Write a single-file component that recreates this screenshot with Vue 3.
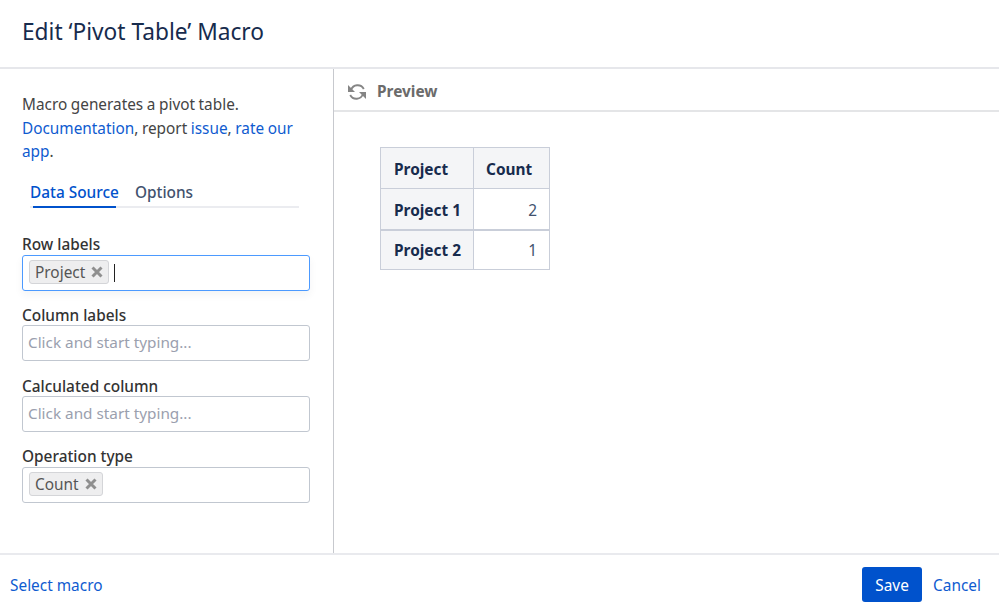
<script setup>
const rows = [{ name: 'Project 1', count: 2 }, { name: 'Project 2', count: 1 }]
</script>

<template>
  <div class="dialog">
    <header class="head"><h1>Edit ‘Pivot Table’ Macro</h1></header>
    <main class="body">
      <aside class="side">
        <p class="intro">Macro generates a pivot table.<br><a>Documentation</a>, report <a>issue</a>, <a>rate our</a><br><a>app</a>.</p>
        <div class="tabs">
          <span class="tab active">Data Source</span>
          <span class="tab">Options</span>
        </div>
        <label class="lab first">Row labels</label>
        <div class="field focus">
          <span class="chip">Project
            <svg class="x" width="12" height="12" viewBox="0 0 12 12"><path d="M1.5 1.5 L10.5 10.5 M10.5 1.5 L1.5 10.5" stroke="#8f8f8f" stroke-width="3" /></svg>
          </span>
          <span class="caret"></span>
        </div>
        <label class="lab">Column labels</label>
        <div class="field ph">Click and start typing...</div>
        <label class="lab">Calculated column</label>
        <div class="field ph">Click and start typing...</div>
        <label class="lab">Operation type</label>
        <div class="field">
          <span class="chip">Count
            <svg class="x" width="12" height="12" viewBox="0 0 12 12"><path d="M1.5 1.5 L10.5 10.5 M10.5 1.5 L1.5 10.5" stroke="#8f8f8f" stroke-width="3" /></svg>
          </span>
        </div>
      </aside>
      <section class="main">
        <div class="prev">
          <svg width="20" height="20" viewBox="0 0 20 20" fill="none" stroke="#858585" stroke-width="1.9">
            <path d="M4 8 A7 7 0 0 1 16.8 7" />
            <path d="M1 3 V10 H8 Z" stroke="none" fill="#858585" />
            <path d="M16 12 A7 7 0 0 1 3.2 13" />
            <path d="M19 17 V10 H12 Z" stroke="none" fill="#858585" />
          </svg>
          <b>Preview</b>
        </div>
        <div class="content">
          <table>
            <colgroup><col class="c1"><col class="c2"></colgroup>
            <thead><tr><th>Project</th><th>Count</th></tr></thead>
            <tbody>
              <tr v-for="r in rows" :key="r.name"><th>{{ r.name }}</th><td>{{ r.count }}</td></tr>
            </tbody>
          </table>
        </div>
      </section>
    </main>
    <footer class="foot">
      <a>Select macro</a>
      <div class="acts"><button>Save</button><a>Cancel</a></div>
    </footer>
  </div>
</template>

<style>
html, body { margin: 0; background: #fff; }
</style>
<style scoped>
.dialog { width: 999px; height: 609px; display: flex; flex-direction: column; font: 15.4px/24px "Noto Sans", sans-serif; color: #42526e; background: #fff; overflow: hidden; }
a { color: #0f5bd0; }
.head { height: 69px; border-bottom: 2px solid #e6e7eb; box-sizing: border-box; padding: 0 0 3px 22px; display: flex; align-items: center; }
h1 { margin: 0; font-size: 22.7px; font-weight: 400; color: #172b4d; }
.body { flex: 1; display: flex; min-height: 0; }
.side { width: 334px; box-sizing: border-box; border-right: 1px solid #c7c9ce; padding: 24px 23px 0 22px; display: flex; flex-direction: column; }
.intro { margin: 0; color: #444; width: 280px; line-height: 23.5px; font-size: 15.35px; word-spacing: -0.4px; }
.tabs { display: flex; gap: 16px; margin: 11px 11px 0 8px; border-bottom: 2px solid #ebecf0; padding-top: 6px; height: 25px; }
.tab { font-weight: 500; }
.tab.active { color: #0052cc; position: relative; height: 25px; }
.tab.active::after { content: ""; position: absolute; left: 3px; right: 3px; bottom: -2px; height: 2px; background: #0052cc; }
.lab { color: #333; font-weight: 500; margin-top: 13.3px; margin-bottom: -2.6px; line-height: 24px; }
.lab.first { margin-top: 25px; margin-bottom: -2px; }
.field { height: 36px; box-sizing: border-box; border: 1px solid #c1c7d0; border-radius: 3px; padding: 0 6px; display: flex; align-items: center; gap: 5px; flex: none; }
.focus { border-color: #4c9aff; box-shadow: 0 4px 8px rgba(9,30,66,.05); }
.ph { color: #9aa0ae; padding: 0 6px 2px 5px; font-size: 15.3px; }
.chip { display: inline-flex; align-items: center; gap: 6px; height: 24px; box-sizing: border-box; padding: 1px 5px 0; background: #eeeeef; border: 1px solid #d4d5d8; border-radius: 3px; color: #555; margin-top: -1px; }
.x { margin-top: -1px; }
.caret { width: 1px; height: 18px; background: #222; }
.main { flex: 1; display: flex; flex-direction: column; }
.prev { height: 43px; flex: none; border-bottom: 2px solid #e4e5e7; box-sizing: border-box; display: flex; align-items: center; gap: 10px; padding: 5px 0 0 13px; color: #6b6b6b; }
.prev b { font-weight: 700; }
.content { padding: 35px 0 0 46px; }
table { border-collapse: collapse; table-layout: fixed; width: 170px; }
.c1 { width: 93px; }
.c2 { width: 76px; }
th, td { border: 1px solid #c9ced9; height: 41px; padding: 3px 12px 0 13px; box-sizing: border-box; color: #172b4d; font-size: 15.4px; }
thead th + th { padding-left: 12px; }
tbody th, tbody td { padding-top: 5px; }
tbody tr:last-child th, tbody tr:last-child td { height: 40px; padding-top: 3px; }
tbody tr:last-child > * { border-top-width: 2px; }
th { background: #f4f5f7; text-align: left; font-weight: 700; }
td { text-align: right; color: #42526e; }
.foot { height: 56px; flex: none; border-top: 2px solid #e9eaee; box-sizing: border-box; display: flex; justify-content: space-between; align-items: center; padding: 4px 18px 0 10px; }
.foot a { padding-top: 3px; }
.acts { display: flex; align-items: center; gap: 11px; }
button { width: 60px; height: 35px; border: 0; border-radius: 3px; background: #0052cc; color: #fff; font: inherit; padding: 3px 0 0; }
</style>
